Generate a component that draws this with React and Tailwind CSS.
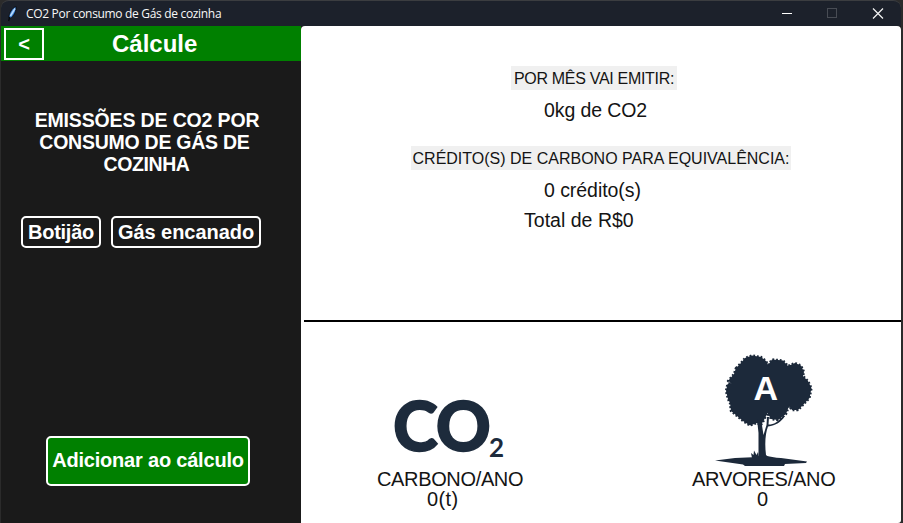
import React from "react";

function Feather() {
  return (
    <svg width="12" height="16" viewBox="0 0 12 16" className="shrink-0">
      <path d="M9 .5C5 2 2 7 1.8 12L3 12.5C7 10 9.5 5 9 .5Z" fill="#3f86d8" stroke="#05080c" strokeWidth="0.8" />
      <path d="M8 2.5L3.4 10" stroke="#b9dcff" strokeWidth="1.5" />
      <path d="M2.8 11L1.6 15" stroke="#05080c" strokeWidth="1.3" />
    </svg>
  );
}

function TitleBar() {
  return (
    <header className="flex h-[26px] shrink-0 items-center rounded-t-lg border-t border-[#3b3d40] bg-[#1c212b] pl-[6px] text-white">
      <Feather />
      <span className="ml-[7px] mt-px whitespace-nowrap font-['Open_Sans','Noto_Sans',sans-serif] text-[12px] leading-4 tracking-[-0.32px] text-[#f8f8f8]">
        CO2 Por consumo de Gás de cozinha
      </span>
      <svg width="102" height="12" viewBox="0 0 102 12" className="ml-auto mr-[17px] -mt-px" fill="none">
        <path d="M0 6.5H10" stroke="#fff" />
        <rect x="45.5" y="1.5" width="9" height="9" stroke="#484c54" />
        <path d="M91 1.5L101 11.5M101 1.5L91 11.5" stroke="#f4f4f4" strokeWidth="1.2" />
      </svg>
    </header>
  );
}

function Sidebar() {
  return (
    <aside className="flex w-[300px] shrink-0 flex-col bg-[#1a1a1a] font-bold text-white">
      <div className="flex h-[35px] items-center bg-[#008000]">
        <button className="ml-[3px] mt-[1px] flex h-8 w-10 items-center justify-center border-2 border-white text-[20px] leading-5">
          &lt;
        </button>
        <h1 className="ml-[68px] text-[24px] leading-7">Cálcule</h1>
      </div>
      <h2 className="mt-12 flex w-[292px] flex-col items-center whitespace-nowrap text-[19.5px] leading-[22px] tracking-[-0.15px]">
        <span>EMISSÕES DE CO2 POR</span>
        <span className="-ml-[5px] tracking-[-0.25px]">CONSUMO DE GÁS DE</span>
        <span className="-ml-px tracking-[-0.4px]">COZINHA</span>
      </h2>
      <div className="ml-5 mt-[41px] flex gap-[10px] whitespace-nowrap text-[20px] leading-6">
        <button className="flex h-8 w-20 items-center justify-center rounded-[5px] border-2 border-white tracking-[-0.25px]">Botijão</button>
        <button className="flex h-8 w-[150px] items-center justify-center rounded-[5px] border-2 border-white tracking-[-0.05px]">Gás encanado</button>
      </div>
      <button className="mb-[37px] ml-[45px] mt-auto flex h-[50px] w-[204px] items-center justify-center whitespace-nowrap rounded-[5px] border-2 border-white bg-[#008000] pb-[2px] text-[20px] tracking-[-0.2px]">
        Adicionar ao cálculo
      </button>
    </aside>
  );
}

function Co2Mark() {
  return (
    <div className="ml-[92px] mt-[74px] flex h-[70px] w-[116px] items-start whitespace-nowrap font-['Lato',sans-serif] font-black text-[#1d2b3c]">
      <span className="text-[68px] leading-[57px] tracking-[-1px] [-webkit-text-stroke:1.5px_#1d2b3c]">CO</span>
      <span className="-ml-px mt-[38px] text-[26px] font-bold leading-[26px]">2</span>
    </div>
  );
}

function TreeMark() {
  return (
    <svg width="124" height="114" viewBox="712 352 124 114" className="ml-[411px] mt-[31px] shrink-0">
      <g fill="#1c293a">
        <path
          d="M736 367L741 362 745 357 752 354.5 761 356 766 360 768 364 772 358.5 778 359 783 359.5 788 365 795 362 801 364.5 804 371 803 375 808 380 811.5 387 809.5 397 803 404 798 409 792 409 789 405 786 413 778 419 771 418 767.5 412 764 419 761 424 757 422 750 424.5 743 420 737 415 731 410 730 402 728 398 726 390 727.5 383 732 382 728 380 734 373Z"
          stroke="#1c293a"
          strokeWidth="2.4"
          strokeDasharray="1.8 1.9"
          strokeLinejoin="round"
        />
        <path d="M757 418L758.5 432L758.500 455L751 458H771L766 454C764.5 442 765.5 432 768 425.5C776 424.5 781 421 785 415L783 415C778 421 774 423.5 768.500 423.5L769 416H767L766.5 424L763.5 434L761 418Z" />
        <path d="M715 459.5L735 457 758 456C765 453 773 457 781 457L807 460.5 806 462 785 463 784 465H745L743 463.5Z" />
        <path d="M752 457L751 452 753.5 454 754 449.5 756.5 454 758 451 759 457Z" />
      </g>
      <text x="765.7" y="399.300" textAnchor="middle" fill="#fff" fontFamily="Liberation Sans, sans-serif" fontWeight="700" fontSize="34">
        A
      </text>
    </svg>
  );
}

function Results() {
  return (
    <main className="flex min-w-0 flex-1 flex-col rounded-t-[4px] rounded-br-[3px] bg-white text-[#141414]">
      <section className="flex h-[294px] shrink-0 flex-col items-start whitespace-nowrap text-[19.5px] leading-[22px]">
        <div className="ml-[210px] mt-10 flex h-6 w-[166px] items-center justify-center bg-[#f0f0f0] pt-[2px] text-[16px] tracking-[-0.3px]">
          POR MÊS VAI EMITIR:
        </div>
        <p className="ml-[243px] mt-[9px] tracking-[-0.1px]">0kg de CO2</p>
        <div className="ml-[110px] mt-[25px] flex h-6 w-[380px] items-center justify-center bg-[#f0f0f0] pt-[2px] text-[16px]">
          CRÉDITO(S) DE CARBONO PARA EQUIVALÊNCIA:
        </div>
        <p className="ml-[243px] mt-[9px] tracking-[-0.05px]">0 crédito(s)</p>
        <p className="ml-[223px] mt-2 tracking-[0.02px]">Total de R$0</p>
      </section>
      <hr className="ml-[3px] h-[2px] shrink-0 border-0 bg-black" />
      <section className="flex whitespace-nowrap text-[20px] leading-5">
        <div className="w-[300px] shrink-0">
          <Co2Mark />
          <div className="ml-[76px] mt-[3px] tracking-[-0.35px]">CARBONO/ANO</div>
          <div className="ml-[126px] tracking-[0.4px]">0(t)</div>
        </div>
        <div className="-ml-[300px] w-[600px] shrink-0">
          <TreeMark />
          <div className="ml-[391px] mt-[2px] tracking-[-0.25px]">ARVORES/ANO</div>
          <div className="ml-[456px]">0</div>
        </div>
      </section>
    </main>
  );
}

export default function App() {
  return (
    <div className="h-[523px] w-[903px] overflow-hidden bg-[#2b2b2b] pl-px pr-[2px] font-['Liberation_Sans',Arial,sans-serif]">
      <div className="flex h-[523px] flex-col">
        <TitleBar />
        <div className="flex min-h-0 flex-1 bg-[#1a1a1a]">
          <Sidebar />
          <Results />
        </div>
      </div>
    </div>
  );
}
